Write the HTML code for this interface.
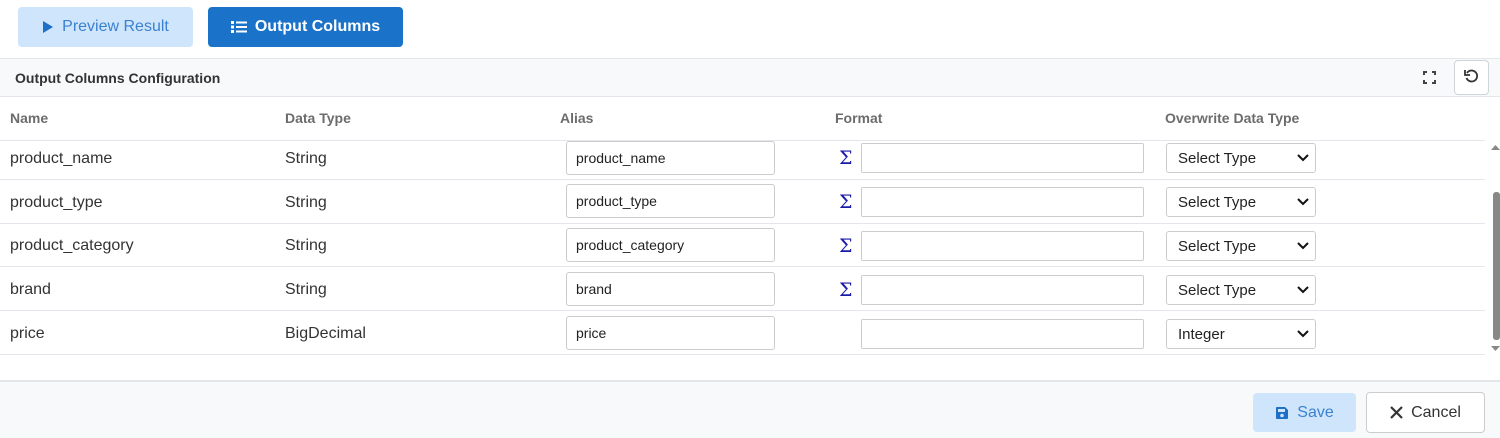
<!DOCTYPE html>
<html><head><style>
*{box-sizing:border-box;margin:0;padding:0}
body{width:1500px;height:438px;background:#fff;font-family:"Liberation Sans",sans-serif;position:relative;overflow:hidden;color:#333}
.abs{position:absolute}
.btn{position:absolute;border-radius:4px;font-size:16px;display:flex;align-items:center;justify-content:center;gap:8px}
.hdr{position:absolute;left:0;top:58px;width:1500px;height:39px;background:#f8f9fa;border-top:1px solid #e3e6ea;border-bottom:1px solid #e3e6ea}
.th{position:absolute;top:110px;font-size:14px;font-weight:bold;color:#6c6c6c}
.row{position:absolute;left:0;width:1485px;border-bottom:1px solid #e3e6ea}
.cell{position:absolute;font-size:16px;color:#333}
.inp{position:absolute;border:1px solid #ccc;border-radius:3px;background:#fff;font-size:14px;padding-left:9px;display:flex;align-items:center;color:#222}
.sel{position:absolute;border:1px solid #ccc;border-radius:3px;background:#fff;font-size:15px;padding-left:11px;display:flex;align-items:center;color:#222;width:150px}
.sel svg{position:absolute;right:6px;top:50%;margin-top:-4px}
.sig{position:absolute;left:839px;font-size:19px;color:#1a1aaa;font-family:"DejaVu Serif",serif}
.fin{position:absolute;left:861px;width:283px;border:1px solid #ccc;border-radius:2px;background:#fff}
</style></head><body>
<div class="btn" style="left:18px;top:7px;width:175px;height:40px;background:#cfe5fb;color:#3a82d0">
<svg width="12" height="14" viewBox="0 0 12 14"><path d="M1 1L11 7L1 13Z" fill="#1f6fc7"/></svg>Preview Result</div>
<div class="btn" style="left:208px;top:7px;width:195px;height:40px;background:#1a73c9;color:#fff;font-weight:bold">
<svg width="16" height="14" viewBox="0 0 16 14"><g fill="#fff"><rect x="0" y="1" width="3" height="3"/><rect x="5" y="1.5" width="11" height="2"/><rect x="0" y="5.5" width="3" height="3"/><rect x="5" y="6" width="11" height="2"/><rect x="0" y="10" width="3" height="3"/><rect x="5" y="10.5" width="11" height="2"/></g></svg>Output Columns</div>
<div class="hdr"><div class="abs" style="left:15px;top:11px;font-size:14px;font-weight:bold;color:#333">Output Columns Configuration</div>
<svg class="abs" style="left:1423px;top:12px" width="13" height="13" viewBox="0 0 13 13"><path d="M1 4V1H4M9 1H12V4M12 9V12H9M4 12H1V9" stroke="#444" stroke-width="2" fill="none"/></svg>
<div class="abs" style="left:1454px;top:1px;width:35px;height:35px;border:1px solid #d0d4d8;border-radius:4px;background:#fff"></div>
<svg class="abs" style="left:1464px;top:10px" width="15" height="15" viewBox="0 0 15 15"><path d="M3 4A5.5 5.5 0 1 1 2.5 9" stroke="#333" stroke-width="1.8" fill="none"/><path d="M1 1V6H6" stroke="#333" stroke-width="1.8" fill="none"/></svg>
</div>
<div class="th" style="left:10px">Name</div><div class="th" style="left:285px">Data Type</div><div class="th" style="left:560px">Alias</div><div class="th" style="left:835px">Format</div><div class="th" style="left:1165px">Overwrite Data Type</div>
<div class="row" style="top:97px;height:44px"></div>

<div class="row" style="top:141px;height:39px"></div>
<div class="cell" style="left:10px;top:150px">product_name</div><div class="cell" style="left:285px;top:150px">String</div>
<div class="inp" style="left:566px;top:141px;width:209px;height:34px">product_name</div>
<div class="sig" style="top:147px">Σ</div><div class="fin" style="top:143px;height:30px"></div>
<div class="sel" style="left:1166px;top:143px;height:30px">Select Type<svg width="12" height="8" viewBox="0 0 12 8"><path d="M1 1L6 6L11 1" stroke="#111" stroke-width="2" fill="none"/></svg></div>

<div class="row" style="top:180px;height:44px"></div>
<div class="cell" style="left:10px;top:194px">product_type</div><div class="cell" style="left:285px;top:194px">String</div>
<div class="inp" style="left:566px;top:184px;width:209px;height:34px">product_type</div>
<div class="sig" style="top:191px">Σ</div><div class="fin" style="top:187px;height:30px"></div>
<div class="sel" style="left:1166px;top:187px;height:30px">Select Type<svg width="12" height="8" viewBox="0 0 12 8"><path d="M1 1L6 6L11 1" stroke="#111" stroke-width="2" fill="none"/></svg></div>

<div class="row" style="top:224px;height:43px"></div>
<div class="cell" style="left:10px;top:237px">product_category</div><div class="cell" style="left:285px;top:237px">String</div>
<div class="inp" style="left:566px;top:228px;width:209px;height:34px">product_category</div>
<div class="sig" style="top:235px">Σ</div><div class="fin" style="top:231px;height:30px"></div>
<div class="sel" style="left:1166px;top:231px;height:30px">Select Type<svg width="12" height="8" viewBox="0 0 12 8"><path d="M1 1L6 6L11 1" stroke="#111" stroke-width="2" fill="none"/></svg></div>

<div class="row" style="top:267px;height:44px"></div>
<div class="cell" style="left:10px;top:281px">brand</div><div class="cell" style="left:285px;top:281px">String</div>
<div class="inp" style="left:566px;top:272px;width:209px;height:34px">brand</div>
<div class="sig" style="top:279px">Σ</div><div class="fin" style="top:275px;height:30px"></div>
<div class="sel" style="left:1166px;top:275px;height:30px">Select Type<svg width="12" height="8" viewBox="0 0 12 8"><path d="M1 1L6 6L11 1" stroke="#111" stroke-width="2" fill="none"/></svg></div>

<div class="row" style="top:311px;height:44px"></div>
<div class="cell" style="left:10px;top:325px">price</div><div class="cell" style="left:285px;top:325px">BigDecimal</div>
<div class="inp" style="left:566px;top:316px;width:209px;height:34px">price</div>
<div class="fin" style="top:319px;height:30px"></div>
<div class="sel" style="left:1166px;top:319px;height:30px">Integer<svg width="12" height="8" viewBox="0 0 12 8"><path d="M1 1L6 6L11 1" stroke="#111" stroke-width="2" fill="none"/></svg></div>

<svg class="abs" style="left:1491px;top:144px" width="9" height="6"><path d="M0 6L4.5 1L9 6Z" fill="#888"/></svg>
<div class="abs" style="left:1493px;top:192px;width:7px;height:148px;background:#888;border-radius:3px"></div>
<svg class="abs" style="left:1491px;top:346px" width="9" height="6"><path d="M0 0L4.5 5L9 0Z" fill="#888"/></svg>

<div class="abs" style="left:0;top:380px;width:1500px;height:58px;background:#f8f9fa;border-top:2px solid #e3e6ea"></div>
<div class="btn" style="left:1253px;top:393px;width:103px;height:39px;background:#cfe5fb;color:#3a82d0">
<svg width="14" height="14" viewBox="0 0 14 14"><path d="M1 2Q1 1 2 1H10L13 4V12Q13 13 12 13H2Q1 13 1 12Z" fill="#1f6fc7"/><rect x="3" y="3" width="7" height="3" fill="#cfe5fb"/><circle cx="7" cy="9.5" r="1.8" fill="#cfe5fb"/></svg>Save</div>
<div class="btn" style="left:1366px;top:392px;width:119px;height:41px;background:#fff;border:1px solid #ccc;color:#333">
<svg width="13" height="13" viewBox="0 0 13 13"><path d="M1 1L12 12M12 1L1 12" stroke="#333" stroke-width="2.2"/></svg>Cancel</div>
</body></html>
